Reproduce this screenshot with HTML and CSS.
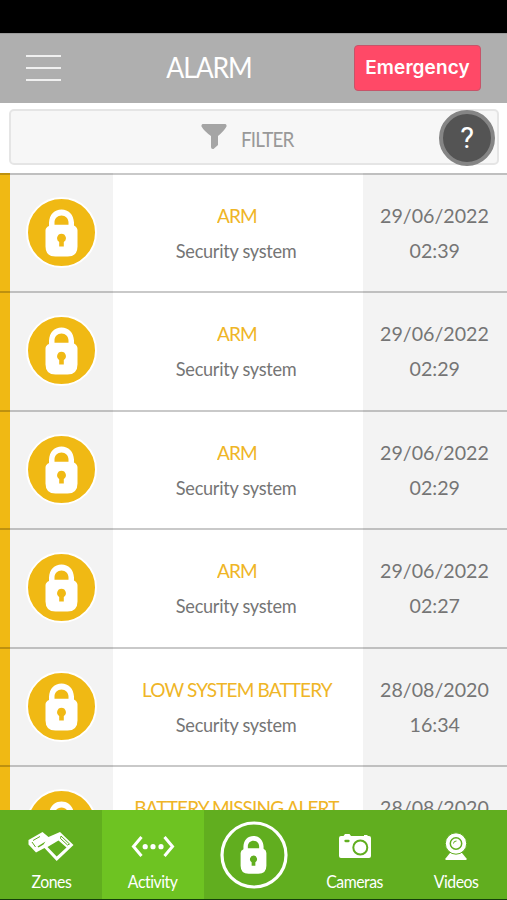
FILE: index.html
```html
<!DOCTYPE html>
<html lang="en">
<head>
<meta charset="utf-8">
<title>Alarm</title>
<link rel="stylesheet" href="styles.css">
</head>
<body>
<svg class="defs" width="0" height="0">
  <symbol id="lock" viewBox="2.5 2.5 67 67">
    <path fill="#fff" fill-rule="evenodd" d="M23.5 29.5V26C24 18 29 13 36 13S48 18 48.5 26V29Q52 31 52 34V50Q52 60 42 60H30Q20 60 20 50V34Q20 31 23.5 29.5ZM29 28.3H43V26C43 22 40 19 36 19S29 22 29 26ZM36 37.3A4.5 4.5 0 0 0 33.7 45.6V50H38.3V45.6A4.5 4.5 0 0 0 36 37.3Z"/>
  </symbol>
</svg>
<div class="app">
  <div class="status"></div>
  <header class="header">
    <div class="menu"><i></i><i></i><i></i></div>
    <h1 class="title">ALARM</h1>
    <button class="emergency">Emergency</button>
  </header>
  <div class="filter-wrap">
    <div class="filter">
      <svg width="26" height="27" viewBox="0 0 26 27"><path fill="#a5a5a5" d="M1.5 1H24.5Q26 1.500 25.500 3.500Q23 8 17 13V22L12.500 26Q10 26.500 10 24V13Q3 8 .5 3.500Q0 1.500 1.500 1Z"/></svg>
      <span>FILTER</span>
    </div>
    <div class="help">?</div>
  </div>
  <main class="list">
    <section class="row"><div class="mark"><svg class="badge"><use href="#lock"/></svg></div><div class="event"><b>ARM</b><span>Security system</span></div><div class="when"><span>29/06/2022</span><span>02:39</span></div></section>
    <section class="row"><div class="mark"><svg class="badge"><use href="#lock"/></svg></div><div class="event"><b>ARM</b><span>Security system</span></div><div class="when"><span>29/06/2022</span><span>02:29</span></div></section>
    <section class="row"><div class="mark"><svg class="badge"><use href="#lock"/></svg></div><div class="event"><b>ARM</b><span>Security system</span></div><div class="when"><span>29/06/2022</span><span>02:29</span></div></section>
    <section class="row"><div class="mark"><svg class="badge"><use href="#lock"/></svg></div><div class="event"><b>ARM</b><span>Security system</span></div><div class="when"><span>29/06/2022</span><span>02:27</span></div></section>
    <section class="row"><div class="mark"><svg class="badge"><use href="#lock"/></svg></div><div class="event"><b>LOW SYSTEM BATTERY</b><span>Security system</span></div><div class="when"><span>28/08/2020</span><span>16:34</span></div></section>
    <section class="row"><div class="mark"><svg class="badge"><use href="#lock"/></svg></div><div class="event"><b>BATTERY MISSING ALERT</b></div><div class="when"><span>28/08/2020</span></div></section>
  </main>
  <nav class="nav">
    <a class="tab">
      <svg width="48" height="34" viewBox="0 0 48 34"><path fill="#fff" d="M15.500 3L21.500 8L33 3L46.500 16L29.700 32L17.500 19L9 23.500L1.500 15.500V11Z"/><path fill="#61ae1f" d="M20.500 18L31.500 11.500L39.500 18.500L29.700 27.500ZM10.500 17.500L18.500 12.500L16.500 15.500L11.500 18.500Z"/><path fill="none" stroke="#61ae1f" stroke-width="1" d="M34 7L42.500 15L40.500 16L33.500 9.500ZM5 13L8.500 18M6 11.500L13 7.500"/></svg>
      <span>Zones</span>
    </a>
    <a class="tab active">
      <svg width="48" height="34" viewBox="0 0 48 34"><g fill="none" stroke="#fff" stroke-width="3"><path d="M12.500 8L4.500 17.500L12.500 27M35.500 8L43.500 17.500L35.500 27"/></g><g fill="#fff"><circle cx="16.200" cy="17.700" r="2.600"/><circle cx="24" cy="17.700" r="2.600"/><circle cx="32" cy="17.700" r="2.600"/></g></svg>
      <span>Activity</span>
    </a>
    <a class="tab center"><svg width="68" height="68" viewBox="0 0 68 68"><circle cx="34" cy="34" r="32" fill="none" stroke="#fff" stroke-width="3.200"/><use href="#lock" x="6.500" y="6.500" width="54" height="54"/></svg></a>
    <a class="tab">
      <svg width="48" height="34" viewBox="0 0 48 34"><path fill="#fff" d="M10 7H12.500L14 5H18.500L20 7H33V6H36.500V7H38Q40 7 40 9V27Q40 29 38 29H10Q8 29 8 27V9Q8 7 10 7Z"/><path d="M14.500 12H17.500" stroke="#61ae1f" stroke-width="2.300" stroke-linecap="round"/><circle cx="29.300" cy="18.500" r="7" fill="#fff" stroke="#61ae1f" stroke-width="2"/></svg>
      <span>Cameras</span>
    </a>
    <a class="tab">
      <svg width="48" height="34" viewBox="0 0 48 34"><path fill="#fff" d="M18 24H30L34.500 29.500V31H13.500V29.500Z"/><circle cx="24" cy="14.500" r="10.700" fill="#fff" stroke="#61ae1f" stroke-width="1"/><circle cx="24" cy="14.500" r="5.700" fill="none" stroke="#61ae1f" stroke-width="1.500"/><path d="M21.500 14.500Q21.500 12 24.500 12" fill="none" stroke="#61ae1f"/></svg>
      <span>Videos</span>
    </a>
  </nav>
</div>
</body>
</html>
```
FILE: styles.css
```css
* { box-sizing: border-box; }
body { margin: 0; background: #fff; font-family: Lato, "Liberation Sans", sans-serif; }
.defs { display: block; }
.app { width: 507px; height: 900px; overflow: hidden; display: flex; flex-direction: column; }
.status { height: 33px; background: #000; flex: none; }
.header { height: 69.5px; flex: none; background: #afafaf; display: grid; grid-template-columns: 114px 190px 203px; align-items: start; border-top: 1px solid #999; }
.menu { display: flex; flex-direction: column; gap: 10px; padding: 21px 0 0 26px; }
.menu i { width: 35px; height: 2px; background: #f0f0f0; }
.title { margin: 15px 0 0; text-align: center; color: #fff; font-size: 28px; line-height: 36px; font-weight: 400; letter-spacing: -1.2px; transform: scaleX(.95); }
.emergency { margin: 11px 0 0 50px; width: 127px; height: 46px; padding: 0; border: 1px solid #c65469; border-radius: 4px; background: #ff4967; color: #fff; font: 600 19px/44px Inter, sans-serif; letter-spacing: .1px; }
.filter-wrap { position: relative; height: 70px; flex: none; padding: 6.500px 8px 0 9px; }
.filter { height: 55.500px; border: 2px solid #e5e5e5; border-radius: 5px; background: #f7f7f7; display: flex; justify-content: center; align-items: center; gap: 14px; color: #999; font-size: 21px; letter-spacing: -1px; padding-right: 8px; }
.filter span { transform: scaleX(.9); transform-origin: left; padding-top: 3px; }
.help { position: absolute; left: 439px; top: 7px; width: 56px; height: 56px; border: 4px solid #858585; border-radius: 50%; background: #545454; color: #fff; font: 400 29px/48px Roboto, sans-serif; text-align: center; }
.list { height: 637px; flex: none; overflow: hidden; }
.row { position: relative; height: 118.600px; display: grid; grid-template-columns: 113px 250px 144px; }
.row::after { content: ""; position: absolute; top: 0; left: 0; right: 0; height: 2px; background: rgba(0,0,0,.21); }
.mark { background: #f3f3f3; border-left: 10.500px solid #f0b914; padding: 24px 0 0 16px; }
.badge { display: block; width: 71px; height: 71px; border: 2px solid #fff; border-radius: 50%; background: #f0b914; }
.event, .when { display: flex; flex-direction: column; align-items: center; padding-top: 25px; color: #757575; font-size: 20px; line-height: 35px; white-space: nowrap; }
.event { padding-right: 3px; }
.event b { font-weight: 400; color: #efb526; letter-spacing: -.9px; transform: scaleX(.95); }
.event span { font-size: 19px; letter-spacing: -.3px; transform: scaleX(.955); }
.when { background: #f3f3f3; padding-right: 1px; }
.when span { transform: scaleX(.98); }
.nav { height: 90px; flex: none; display: grid; grid-template-columns: 102px 102px 100px 101px 102px; background: #61ae1f; border-bottom: 1px solid #153f0a; }
.tab { display: flex; flex-direction: column; align-items: center; padding-top: 19px; color: #fff; font-size: 17px; line-height: 22px; }
.tab span { margin-top: 8px; letter-spacing: -.5px; transform: scaleX(.93); }
.active { background: #6ec322; }
.center { padding-top: 11px; }
```
